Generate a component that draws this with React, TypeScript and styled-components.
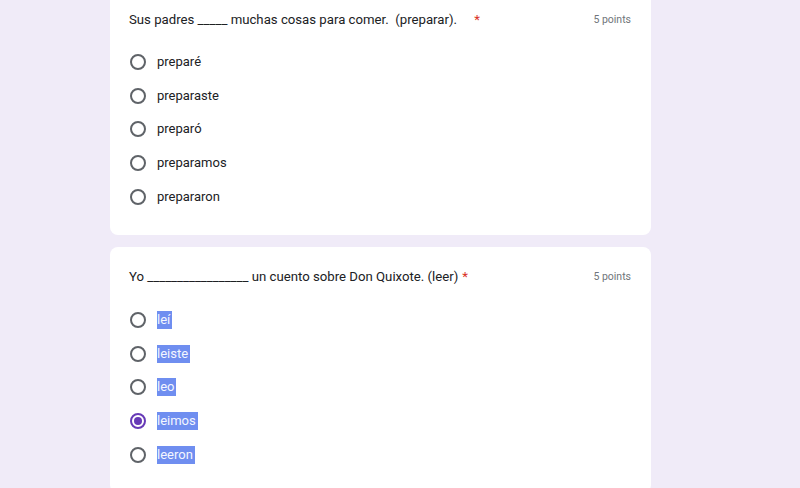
import React from "react";
import styled, { createGlobalStyle } from "styled-components";

const Global = createGlobalStyle`
  html, body { margin: 0; padding: 0; background: #f0ebf8; }
  body { font-family: Roboto, "Liberation Sans", Arial, sans-serif; overflow: hidden; }
`;

const Page = styled.div`
  display: flex;
  flex-direction: column;
  gap: 12px;
  margin-top: -11px;
  padding-left: 110px;
  height: 510px;
`;

const Card = styled.section`
  width: 541px;
  box-sizing: border-box;
  background: #fff;
  border-radius: 8px;
  padding: 21px 20px 21px 19px;
  flex-shrink: 0;
`;

const Header = styled.div`
  display: flex;
  justify-content: space-between;
  align-items: center;
  height: 18px;
  margin-bottom: 17px;
`;

const Title = styled.div`
  font-size: 13.2px;
  color: #202124;
  white-space: pre;
`;

const Star = styled.span`
  color: #d93025;
  margin-left: 4px;
`;

const Points = styled.div`
  font-size: 10.5px;
  color: #70757a;
`;

const Options = styled.div`
  display: flex;
  flex-direction: column;
`;

const Row = styled.label`
  display: flex;
  align-items: center;
  height: 33.8px;
  gap: 11px;
  padding-left: 1px;
`;

const Radio = styled.span<{ $checked?: boolean }>`
  width: 16px;
  height: 16px;
  box-sizing: border-box;
  border-radius: 50%;
  border: 2px solid ${(p) => (p.$checked ? "#673ab7" : "#5f6368")};
  display: flex;
  align-items: center;
  justify-content: center;
  flex-shrink: 0;
  &::after {
    content: "";
    width: 8px;
    height: 8px;
    border-radius: 50%;
    background: ${(p) => (p.$checked ? "#673ab7" : "transparent")};
  }
`;

const OptionText = styled.span<{ $selected?: boolean }>`
  font-size: 13px;
  line-height: 18px;
  color: ${(p) => (p.$selected ? "#f4f6ff" : "#202124")};
  background: ${(p) => (p.$selected ? "#6f8ef0" : "transparent")};
  padding-right: ${(p) => (p.$selected ? "2px" : "0")};
`;

type Q = {
  title: string;
  options: string[];
  selectedText?: boolean;
  checked?: number;
};

const questions: Q[] = [
  {
    title: "Sus padres _____ muchas cosas para comer.  (preparar).    ",
    options: ["preparé", "preparaste", "preparó", "preparamos", "prepararon"],
  },
  {
    title: "Yo _________________ un cuento sobre Don Quixote. (leer)",
    options: ["leí", "leiste", "leo", "leimos", "leeron"],
    selectedText: true,
    checked: 3,
  },
];

export default function App() {
  return (
    <>
      <Global />
      <Page>
        {questions.map((q, qi) => (
          <Card key={qi}>
            <Header>
              <Title>
                {q.title}
                <Star>*</Star>
              </Title>
              <Points>5 points</Points>
            </Header>
            <Options>
              {q.options.map((o, oi) => (
                <Row key={oi}>
                  <Radio $checked={q.checked === oi} />
                  <OptionText $selected={q.selectedText}>{o}</OptionText>
                </Row>
              ))}
            </Options>
          </Card>
        ))}
      </Page>
    </>
  );
}
